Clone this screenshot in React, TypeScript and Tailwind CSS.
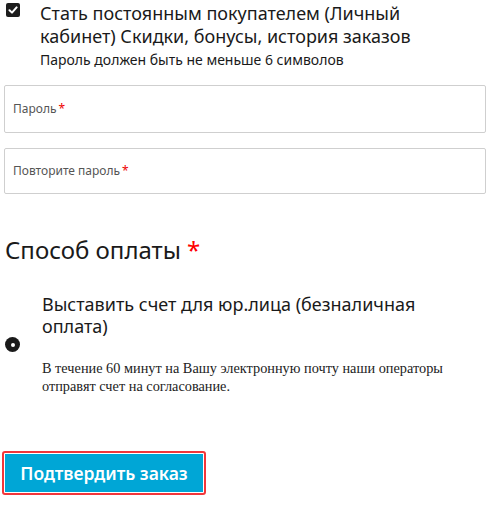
export default function App() {
  return (
    <div
      className="w-[492px] h-[505px] bg-white text-[#1a1a1a] overflow-hidden"
      style={{ fontFamily: '"Noto Sans", "Open Sans", sans-serif' }}
    >
      {/* Account checkbox */}
      <div className="flex pt-[3px]">
        <div className="ml-[6px] w-[14px] h-[14px] rounded-[2px] bg-[#1d1d1d] flex items-center justify-center shrink-0">
          <svg width="10" height="10" viewBox="0 0 10 10">
            <path d="M1.5 5.2 L4 7.6 L8.6 2.4" stroke="#fff" strokeWidth="2" fill="none" strokeLinecap="round" strokeLinejoin="round" />
          </svg>
        </div>
        <div className="ml-[20px] -mt-[1px]">
          <div className="text-[18px] leading-[23px]">
            Стать постоянным покупателем (Личный
            <br />
            кабинет) Скидки, бонусы, история заказов
          </div>
          <div className="text-[14px] leading-[18px] mt-[3px]">Пароль должен быть не меньше 6 символов</div>
        </div>
      </div>

      {/* Password fields */}
      <div className="mx-[4px] mt-[16px] w-[482px]">
        <div className="h-[48px] border border-[#cfcfcf] rounded-[2px] flex items-center px-[8px]">
          <span className="text-[12px] text-[#555]">Пароль</span>
          <span className="text-[12px] text-[#e00] ml-[2px]">*</span>
        </div>
        <div className="h-[46px] mt-[15px] border border-[#cfcfcf] rounded-[2px] flex items-center px-[8px]">
          <span className="text-[12px] text-[#555]">Повторите пароль</span>
          <span className="text-[12px] text-[#e00] ml-[2px]">*</span>
        </div>
      </div>

      {/* Payment method */}
      <div className="ml-[5px] mt-[41px] text-[24px] leading-[30px] flex">
        <span>Способ оплаты</span>
        <span className="text-[#f00] ml-[6px]">*</span>
      </div>

      <div className="flex mt-[28px]">
        <div className="ml-[5px] mt-[44px] w-[15px] h-[15px] rounded-full bg-[#1a1a1a] flex items-center justify-center shrink-0">
          <div className="w-[4px] h-[4px] rounded-full bg-white" />
        </div>
        <div className="ml-[22px]">
          <div className="text-[18px] leading-[22px]">
            Выставить счет для юр.лица (безналичная
            <br />
            оплата)
          </div>
          <div
            className="mt-[22px] text-[14.3px] leading-[18px] text-[#222]"
            style={{ fontFamily: '"Liberation Serif", serif' }}
          >
            В течение 60 минут на Вашу электронную почту наши операторы
            <br />
            отправят счет на согласование.
          </div>
        </div>
      </div>

      {/* Submit */}
      <div className="ml-[2px] mt-[56px] w-[204px] h-[44px] border-[2px] border-[#f2363a] rounded-[3px] p-[1px]">
        <button className="w-full h-full bg-[#00a6d6] text-white text-[17.5px] font-semibold flex items-center justify-center">
          Подтвердить заказ
        </button>
      </div>
    </div>
  );
}
